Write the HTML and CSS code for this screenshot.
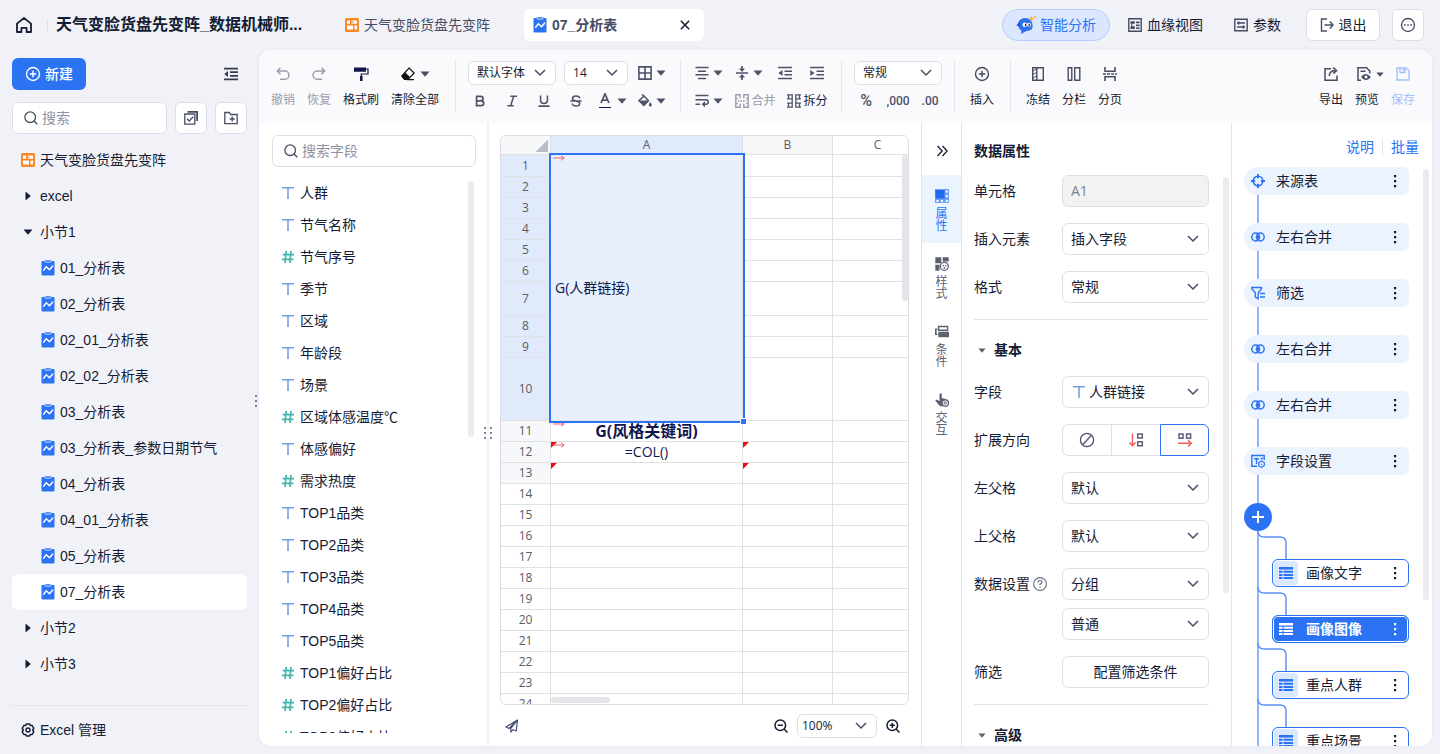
FILE: index.html
```html
<!DOCTYPE html>
<html lang="zh-CN">
<head>
    <meta charset="UTF-8">
    <meta name="viewport" content="width=device-width, initial-scale=1.0">
    <title>07_分析表</title>
    <link rel="stylesheet" href="styles.css">
</head>
<body>
    <!-- icon sprite -->
    <svg class="sprite" aria-hidden="true">
        <symbol id="i-home" viewBox="0 0 16 16"><path d="M1 6.600 8 1l7 5.600V15H10.600v-4.200H5.400V15H1z" fill="none" stroke="currentColor" stroke-width="1.800" stroke-linejoin="round"/></symbol>
        <symbol id="i-board" viewBox="0 0 14 14"><rect width="14" height="14" rx="1.500" fill="#fb8726"/><path d="M2 2.500h3v3.300H2zM6.500 2.500H12v3.300H6.500zM2 7.500h6v4H2zM9.500 7.500H12v4H9.500z" fill="#fff"/><path d="M6 4.200h3" stroke="#fb8726"/></symbol>
        <symbol id="i-report" viewBox="0 0 14 16"><rect x=".5" y="1" width="13" height="14.500" rx="1" fill="#2c73f4"/><path d="M3.500 0h7v1.600q0 1.400-1.400 1.400H4.900Q3.500 3 3.500 1.600z" fill="#8fb5fa"/><path d="M5 1h4" stroke="#2c73f4"/><path d="M2.600 10.300 5.300 6.800l3.200 3 3-3.600" fill="none" stroke="#fff" stroke-width="1.400"/><path d="M10.200 5.400h2v2zM2 9.400l1.600 1.600H2z" fill="#fff"/></symbol>
        <symbol id="i-close" viewBox="0 0 10 10"><path d="M.8.8l8.400 8.400M9.200.8.8 9.200" stroke="currentColor" stroke-width="1.500"/></symbol>
        <symbol id="i-bot" viewBox="0 0 20 18"><path d="M2 7Q4 2 9.500 2T16.500 8.500 10.500 15L5 18l.5-3Q3 13.500 2.500 10.500z" fill="#2c73f4"/><path d="M.3 9.200 3.400 6.300l.8 4.400z" fill="#1b50c9"/><circle cx="8.800" cy="8.800" r="2.300" fill="#fff"/><circle cx="13" cy="8.800" r="2" fill="#fff"/><path d="M9 7.700h1.200v2.500H9zM12.600 7.700h1.200v2.500h-1.200z" fill="#141c33"/><path d="M15.500 0q.3 2.300 2.600 2.700-2.300.4-2.600 2.700-.4-2.300-2.700-2.700 2.300-.4 2.700-2.700z" fill="#fbae17"/><circle cx="19" cy="1" r=".9" fill="#fbae17"/></symbol>
        <symbol id="i-lineage" viewBox="0 0 14 14"><path d="M.8.8h12.400v12.400H.8z" fill="none" stroke="currentColor" stroke-width="1.400"/><path d="M2.500 3.200h4.300v2.600H2.500zM8 3.600h3.600v1.600H8zM8 6.600h3.600v1.600H8zM2.500 8.300h4.300v2.600H2.500zM8 9.500h3.600v1.600H8z" fill="currentColor"/><path d="M3.800 5v4" stroke="currentColor"/></symbol>
        <symbol id="i-params" viewBox="0 0 14 14"><path d="M.8 1.300h12.400v11.400H.8z" fill="none" stroke="currentColor" stroke-width="1.400"/><path d="M3 5h8M3 9h8" stroke="currentColor" stroke-width="1.300"/><path d="M4.600 3.600v2.800M9.400 7.600v2.800" stroke="currentColor" stroke-width="1.600"/></symbol>
        <symbol id="i-exit" viewBox="0 0 14 14"><path d="M7 1H1.500v12H7M4.500 7H13M9.800 3.600 13 7l-3.200 3.400" fill="none" stroke="currentColor" stroke-width="1.400"/></symbol>
        <symbol id="i-more" viewBox="0 0 16 16"><circle cx="8" cy="8" r="6.500" fill="none" stroke="currentColor" stroke-width="1.300"/><path d="M4 7.300h1.600v1.500H4zM7.200 7.300h1.600v1.500H7.200zM10.400 7.300H12v1.500h-1.600z" fill="currentColor"/></symbol>
        <symbol id="i-plus-circle" viewBox="0 0 16 16"><circle cx="8" cy="8" r="6.500" fill="none" stroke="currentColor" stroke-width="1.400"/><path d="M8 4.800v6.400M4.800 8h6.400" stroke="currentColor" stroke-width="1.500"/></symbol>
        <symbol id="i-collapse" viewBox="0 0 14 14"><path d="M0 1.700h14M6 5.200h8M6 8.800h8M0 12.300h14" stroke="currentColor" stroke-width="1.800"/><path d="M4 4v6L.3 7z" fill="currentColor"/></symbol>
        <symbol id="i-indent-l" viewBox="0 0 14 14"><path d="M0 1.500h14M6.500 5.200H14M6.500 8.800H14M0 12.500h14" stroke="currentColor" stroke-width="1.600"/><path d="M4.500 4v6L.3 7z" fill="currentColor"/></symbol>
        <symbol id="i-indent-r" viewBox="0 0 14 14"><path d="M0 1.500h14M6.500 5.200H14M6.500 8.800H14M0 12.500h14" stroke="currentColor" stroke-width="1.600"/><path d="M.3 4v6l4.200-3z" fill="currentColor"/></symbol>
        <symbol id="i-search" viewBox="0 0 14 14"><circle cx="6.200" cy="6.200" r="5.300" fill="none" stroke="currentColor" stroke-width="1.300"/><path d="M10 10l3.300 3.300" stroke="currentColor" stroke-width="1.400"/></symbol>
        <symbol id="i-multi" viewBox="0 0 14 14"><path d="M.8 3h10v10.200H.8z" fill="none" stroke="currentColor" stroke-width="1.300"/><path d="M3 7.700 5.200 10l4-4.300" fill="none" stroke="currentColor" stroke-width="1.300"/><path d="M3.500 0H14v10h-1.800V1.800H3.500z" fill="currentColor"/></symbol>
        <symbol id="i-folder" viewBox="0 0 14 14"><path d="M.8 1.500h4.400l1.500 2h6.500v9.200H.8z" fill="none" stroke="currentColor" stroke-width="1.300"/><path d="M8.200 5.500v5M5.700 8h5" stroke="currentColor" stroke-width="1.400"/></symbol>
        <symbol id="i-caret" viewBox="0 0 10 6"><path d="M.5.500h9L5 5.800z" fill="currentColor"/></symbol>
        <symbol id="i-caret-r" viewBox="0 0 6 10"><path d="M.5.500v9L5.800 5z" fill="currentColor"/></symbol>
        <symbol id="i-chevron" viewBox="0 0 12 8"><path d="M1 1l5 5 5-5" fill="none" stroke="currentColor" stroke-width="1.500"/></symbol>
        <symbol id="i-gear" viewBox="0 0 14 14"><path d="M5.400 1h3.200l.8 1.600 1.800-.1 1.600 2.800L11.700 7l1.100 1.700-1.600 2.800-1.800-.1L8.600 13H5.400l-.8-1.600-1.800.1-1.600-2.800L2.300 7 1.200 5.300l1.600-2.800 1.800.1z" fill="none" stroke="currentColor" stroke-width="1.500" stroke-linejoin="round"/><circle cx="7" cy="7" r="2" fill="none" stroke="currentColor" stroke-width="1.400"/></symbol>
        <symbol id="i-text" viewBox="0 0 12 12"><path d="M0 .8h12M6 .8V12" stroke="#7a9ce2" stroke-width="1.600"/></symbol>
        <symbol id="i-num" viewBox="0 0 12 12"><path d="M4.200 0 3 12M9 0 7.800 12M.7 3.700H12M0 8.300h11.400" stroke="#40b5ac" stroke-width="1.700"/></symbol>
        <symbol id="i-undo" viewBox="0 0 14 14"><path d="M4.500.8 1.300 4l3.200 3.200M1.500 4h7.300a4 4 0 0 1 0 8.300H4" fill="none" stroke="currentColor" stroke-width="1.500"/></symbol>
        <symbol id="i-redo" viewBox="0 0 14 14"><path d="M9.500.8 12.700 4 9.500 7.200M12.500 4H5.200a4 4 0 0 0 0 8.300H10" fill="none" stroke="currentColor" stroke-width="1.500"/></symbol>
        <symbol id="i-brush" viewBox="0 0 16 14"><path d="M1 .5h12v4.300H1z" fill="#11174d"/><path d="M13 2h2v5H8.300v3" fill="none" stroke="#11174d" stroke-width="1.200"/><path d="M7 9h2.600v5H7z" fill="#11174d"/></symbol>
        <symbol id="i-eraser" viewBox="0 0 14 14"><path d="M8 1l5.200 5L7 12.300H3.500L.8 9z" fill="#fff" stroke="#111" stroke-width="1.200"/><path d="M4 5.200 9.300 10.200 7 12.600H3.300L.5 9zM6 12h7v1.300H6z" fill="#111"/></symbol>
        <symbol id="i-border" viewBox="0 0 14 14"><path d="M.9.9h12.200v12.200H.9zM7 1v12M1 7h12" fill="none" stroke="currentColor" stroke-width="1.600"/></symbol>
        <symbol id="i-bold" viewBox="0 0 14 14"><path d="M3 1.500h4.800q2.700 0 2.700 2.700T7.800 6.900H3zM3 6.900h5.300q3 0 3 2.800t-3 2.800H3z" fill="none" stroke="currentColor" stroke-width="2"/></symbol>
        <symbol id="i-italic" viewBox="0 0 14 14"><path d="M5 1.500h8M1.500 12.500H9M9 1.500 5.400 12.500" stroke="currentColor" stroke-width="1.800"/></symbol>
        <symbol id="i-underline" viewBox="0 0 14 14"><path d="M3 .5v5.700q0 3.800 4 3.800t4-3.800V.5M.5 13h13" fill="none" stroke="currentColor" stroke-width="1.800"/></symbol>
        <symbol id="i-strike" viewBox="0 0 14 14"><path d="M11.500 4Q11 1.200 7 1.200T2.800 4.200q0 2 4.200 2.800t4.400 2.900q0 2.900-4.400 2.900T2.500 10M.5 7h13" fill="none" stroke="currentColor" stroke-width="1.700"/></symbol>
        <symbol id="i-color" viewBox="0 0 14 16"><path d="M3 10 7 .8 11 10M4.400 7.200h5.200" fill="none" stroke="currentColor" stroke-width="1.700"/><path d="M1 14.500h12" stroke="#11174d" stroke-width="1.200"/></symbol>
        <symbol id="i-fill" viewBox="0 0 14 14"><path d="M5.500 1.500 10.500 6.700l-4.600 4.700L1 6.700l4.700-4.500" fill="none" stroke="currentColor" stroke-width="1.500"/><path d="M1 6.500h9.500l-4.600 5zM12.300 8q1.500 2.200 1.500 3a1.400 1.400 0 0 1-3 0q0-.8 1.500-3z" fill="currentColor"/><path d="M4 0l2 2.500" stroke="currentColor" stroke-width="1.300"/></symbol>
        <symbol id="i-align" viewBox="0 0 14 14"><path d="M.5 1.500h13M3 5.200h8M.5 8.800h13M3 12.500h8" stroke="currentColor" stroke-width="1.600"/></symbol>
        <symbol id="i-valign" viewBox="0 0 14 14"><path d="M1 7h12M7 0v4M7 14v-4" stroke="currentColor" stroke-width="1.700"/><path d="M4 2.500h6L7 6zM4 11.500h6L7 8z" fill="currentColor"/></symbol>
        <symbol id="i-wrap" viewBox="0 0 14 14"><path d="M.5 1.500h13M.5 5.700H11q2.300 0 2.300 2.300T11 10.300H8M.5 10.300H5" fill="none" stroke="currentColor" stroke-width="1.600"/><path d="M10 7.300v6l-3.400-3z" fill="currentColor"/></symbol>
        <symbol id="i-merge" viewBox="0 0 14 14"><path d="M5.200 4.300V.8H.8v12.400h4.400V9.700M8.800 4.300V.8h4.400v12.400H8.800V9.700M.8 4.500h2M.8 9.500h2M11.200 4.500h2M11.200 9.500h2" fill="none" stroke="currentColor" stroke-width="1.400"/><path d="M3 7h8" stroke="currentColor" stroke-width="1.300" stroke-dasharray="1.500 1"/></symbol>
        <symbol id="i-split" viewBox="0 0 14 14"><path d="M0 .8h5.200v12.400H0M14 .8H8.800v12.400H14M0 4.800h5M0 9.200h5M9 4.800h5M9 9.200h5M1.500 1v4M1.500 9v4M12.500 1v4M12.500 9v4" fill="none" stroke="currentColor" stroke-width="1.300"/></symbol>
        <symbol id="i-freeze" viewBox="0 0 14 14"><path d="M1.700.8h10.600v12.400H1.700zM5.800.8v12.400" fill="none" stroke="currentColor" stroke-width="1.400"/><path d="M2 4l3.500-2M2 7.500l3.500-2M2 11l3.500-2" stroke="currentColor"/></symbol>
        <symbol id="i-columns" viewBox="0 0 14 14"><path d="M1.200.8h3.600v12.400H1.200zM7.700.8h5.100v12.400H7.700z" fill="none" stroke="currentColor" stroke-width="1.400"/></symbol>
        <symbol id="i-page" viewBox="0 0 14 14"><path d="M2 0v4.200h10V0M2 14V9.800h10V14" fill="none" stroke="currentColor" stroke-width="1.600"/><path d="M0 7h14" stroke="currentColor" stroke-width="1.600" stroke-dasharray="3 1"/></symbol>
        <symbol id="i-export" viewBox="0 0 14 14"><path d="M7 1.700H1v11.500h12V8.500" fill="none" stroke="currentColor" stroke-width="1.500"/><path d="M5.300 9Q5.300 4 11 3.500M9 .6l3.600 2.900L9.300 6.600" fill="none" stroke="currentColor" stroke-width="1.500"/></symbol>
        <symbol id="i-preview" viewBox="0 0 14 14"><path d="M4 13.200H1V.8h8.500L12.700 4v2.500M3.500 4.200h5" fill="none" stroke="currentColor" stroke-width="1.500"/><path d="M4 10q4.500-6 9.800 0-4.800 6.500-9.800 0z" fill="currentColor"/><circle cx="9" cy="10" r="1.500" fill="#fafafc"/></symbol>
        <symbol id="i-save" viewBox="0 0 14 14"><path d="M1 1h9.300L13 3.700V13H1zM4 1v4.500h5V1M7.500 2v2" fill="none" stroke="currentColor" stroke-width="1.400"/></symbol>
        <symbol id="i-plane" viewBox="0 0 14 14"><path d="M12.500 1 1 8l3 1.500zM12.500 1 5.800 9.500V13L8 10.700l3.200 1.300zM4 9.500 9 5" fill="none" stroke="currentColor" stroke-width="1.200" stroke-linejoin="round"/></symbol>
        <symbol id="i-zoom-out" viewBox="0 0 14 14"><circle cx="6.300" cy="6.300" r="5.300" fill="none" stroke="currentColor" stroke-width="1.500"/><path d="M10 10l3.500 3.500M3.700 6.300h5.200" stroke="currentColor" stroke-width="1.500"/></symbol>
        <symbol id="i-zoom-in" viewBox="0 0 14 14"><circle cx="6.300" cy="6.300" r="5.300" fill="none" stroke="currentColor" stroke-width="1.500"/><path d="M10 10l3.500 3.500M3.700 6.300h5.200M6.300 3.700v5.200" stroke="currentColor" stroke-width="1.500"/></symbol>
        <symbol id="i-double" viewBox="0 0 12 12"><path d="M1.500 1l4.700 5-4.700 5M6.500 1l4.700 5-4.700 5" fill="none" stroke="currentColor" stroke-width="1.300"/></symbol>
        <symbol id="i-attr" viewBox="0 0 14 14"><path d="M0 0h14v14H0z" fill="#6fa0f8"/><path d="M.5 1h9v8.500h-9z" fill="#1f69f3"/><path d="M10.800 1.500h2v2h-2zM10.800 6h2v2h-2zM1.500 11h2v2h-2zM6 11h2v2H6zM10.800 11h2v2h-2z" fill="#fff"/></symbol>
        <symbol id="i-style" viewBox="0 0 14 14"><path d="M.3.3h6v6h-6zM7.700.3h6v4.200h-6zM.3 7.700h4.200v6H.3z" fill="currentColor"/><circle cx="9.300" cy="9.300" r="4" fill="#fff" stroke="currentColor" stroke-width="1.300"/><path d="M7.500 8H9v1.200H7.500zM10 8h1.300v1.200H10zM8.600 10.300h1.600v1.500H8.600z" fill="currentColor"/></symbol>
        <symbol id="i-cond" viewBox="0 0 14 14"><path d="M3.600 1.500h9v3.800h-9z" fill="none" stroke="currentColor" stroke-width="1.400"/><path d="M3.300 6.800H14v5.500H3.300zM0 3.500h2.500v1.300h-.9v4h.9V10H0z" fill="currentColor"/></symbol>
        <symbol id="i-touch" viewBox="0 0 14 14"><path d="M4.500.5h2.300V5L12 6.500l1 1.800-4 5H5L.3 7.800l1-1.300L4.500 8z" fill="currentColor"/><circle cx="10.300" cy="10" r="3.200" fill="#fff" stroke="currentColor" stroke-width="1.200"/><circle cx="10.300" cy="10" r="1.200" fill="none" stroke="currentColor"/></symbol>
        <symbol id="i-none" viewBox="0 0 16 16"><circle cx="8" cy="8" r="6.600" fill="none" stroke="currentColor" stroke-width="1.300"/><path d="M3.800 12.500l8.500-9" stroke="currentColor" stroke-width="1.300"/></symbol>
        <symbol id="i-down" viewBox="0 0 16 16"><path d="M4.500 1.500v12M1.500 10.500l3 3.300 3-3.300" fill="none" stroke="#ee5b5b" stroke-width="1.400"/><path d="M9.700 2h4.600v4H9.700zM9.700 9.700h4.600v4H9.700z" fill="none" stroke="#5b6080" stroke-width="1.500"/></symbol>
        <symbol id="i-right" viewBox="0 0 16 16"><path d="M2 2h4v4.300H2zM9.600 2h4v4.300h-4z" fill="none" stroke="#5b6080" stroke-width="1.500"/><path d="M1 11.300h13M11 8.200l3.300 3.100-3.300 3.100" fill="none" stroke="#ee5b5b" stroke-width="1.400"/></symbol>
        <symbol id="i-help" viewBox="0 0 14 14"><circle cx="7" cy="7" r="6.400" fill="none" stroke="currentColor" stroke-width="1.100"/><path d="M5 5.500q0-2 2-2t2 1.700Q9 6.300 7 7.300v1.300M7 9.700v1.300" fill="none" stroke="currentColor" stroke-width="1.200"/></symbol>
        <symbol id="i-source" viewBox="0 0 14 14"><circle cx="7" cy="7" r="4.800" fill="none" stroke="currentColor" stroke-width="1.600"/><path d="M7 0v4.200M7 9.800V14M0 7h4.200M9.800 7H14" stroke="currentColor" stroke-width="1.900"/></symbol>
        <symbol id="i-join" viewBox="0 0 14 14"><circle cx="4.700" cy="7" r="3.900" fill="none" stroke="currentColor" stroke-width="1.500"/><circle cx="9.300" cy="7" r="3.900" fill="none" stroke="currentColor" stroke-width="1.500"/><path d="M7 4q2.200 3 0 6-2.200-3 0-6z" fill="currentColor"/></symbol>
        <symbol id="i-filter" viewBox="0 0 14 14"><path d="M.8 1.500h9.700v1.300L7.200 6.700v6L4.300 11V6.700L.8 2.800z" fill="none" stroke="currentColor" stroke-width="1.400"/><path d="M9 7.500h5M9 11h5" stroke="currentColor" stroke-width="1.400"/></symbol>
        <symbol id="i-field" viewBox="0 0 14 14"><path d="M6 12.300H.8V1.500h12.400V6M3 4.700h5M5.500 4.700V10M9.500 4.500H12" fill="none" stroke="currentColor" stroke-width="1.400"/><path d="M10.500 7l2.800 1.600v3.100l-2.800 1.600-2.800-1.600V8.600z" fill="none" stroke="currentColor" stroke-width="1.200"/><circle cx="10.500" cy="10.200" r=".8" fill="currentColor"/></symbol>
        <symbol id="i-table" viewBox="0 0 14 12"><path d="M0 0h14v2.600H0zM0 3.800h3.500v2H0zM4.500 3.800H14v2H4.500zM0 6.900h3.500v2H0zM4.500 6.900H14v2H4.500zM0 10h3.500v2H0zM4.500 10H14v2H4.500z" fill="currentColor"/></symbol>
        <symbol id="i-dots" viewBox="0 0 4 14"><path d="M1 1h2.200v2.200H1zM1 6h2.200v2.200H1zM1 11h2.200v2.200H1z" fill="currentColor"/></symbol>
        <symbol id="i-plus" viewBox="0 0 12 12"><path d="M6 0v12M0 6h12" stroke="currentColor" stroke-width="2"/></symbol>
        <symbol id="i-expand" viewBox="0 0 12 6"><path d="M0 3h11M8 .7 11.200 3 8 5.300" fill="none" stroke="#f8606c"/></symbol>
        <symbol id="i-branch" viewBox="0 0 28 28"><path d="M-1 0q0 6 6 6h16q6 0 6 6v16" fill="none" stroke="#5e91f7" stroke-width="1.500"/></symbol>
    </svg>

    <header class="topbar">
        <a class="home" href="#" aria-label="首页"><svg class="ico-lg"><use href="#i-home"/></svg></a>
        <span class="topbar-sep"></span>
        <h1 class="project">天气变脸货盘先变阵_数据机械师...</h1>
        <nav class="tabs">
            <a class="tab" href="#"><svg class="ico"><use href="#i-board"/></svg>天气变脸货盘先变阵</a>
            <div class="tab tab-active"><svg class="ico-report"><use href="#i-report"/></svg>07_分析表<button class="tab-close" aria-label="关闭"><svg><use href="#i-close"/></svg></button></div>
        </nav>
        <div class="top-actions">
            <button class="btn-ai"><svg><use href="#i-bot"/></svg>智能分析</button>
            <button class="btn-text"><svg class="ico"><use href="#i-lineage"/></svg>血缘视图</button>
            <button class="btn-text btn-params"><svg class="ico"><use href="#i-params"/></svg>参数</button>
            <button class="btn-box btn-exit"><svg class="ico"><use href="#i-exit"/></svg>退出</button>
            <button class="btn-box btn-icon" aria-label="更多"><svg class="ico-lg"><use href="#i-more"/></svg></button>
        </div>
    </header>

    <div class="layout">
        <aside class="sidebar">
            <div class="sidebar-head">
                <button class="btn-new"><svg class="ico-lg"><use href="#i-plus-circle"/></svg>新建</button>
                <button class="btn-fold" aria-label="收起"><svg class="ico"><use href="#i-collapse"/></svg></button>
            </div>
            <div class="sidebar-search">
                <label class="search"><svg class="ico"><use href="#i-search"/></svg><input type="text" placeholder="搜索" aria-label="搜索"></label>
                <button class="btn-box btn-icon" aria-label="多选"><svg class="ico"><use href="#i-multi"/></svg></button>
                <button class="btn-box btn-icon" aria-label="新建文件夹"><svg class="ico"><use href="#i-folder"/></svg></button>
            </div>
            <nav class="tree">
                <a class="node" href="#"><svg class="ico"><use href="#i-board"/></svg>天气变脸货盘先变阵</a>
                <a class="node" href="#"><svg class="caret-r"><use href="#i-caret-r"/></svg>excel</a>
                <a class="node" href="#"><svg class="caret-d"><use href="#i-caret"/></svg>小节1</a>
                <a class="node leaf" href="#"><svg class="ico-report"><use href="#i-report"/></svg>01_分析表</a>
                <a class="node leaf" href="#"><svg class="ico-report"><use href="#i-report"/></svg>02_分析表</a>
                <a class="node leaf" href="#"><svg class="ico-report"><use href="#i-report"/></svg>02_01_分析表</a>
                <a class="node leaf" href="#"><svg class="ico-report"><use href="#i-report"/></svg>02_02_分析表</a>
                <a class="node leaf" href="#"><svg class="ico-report"><use href="#i-report"/></svg>03_分析表</a>
                <a class="node leaf" href="#"><svg class="ico-report"><use href="#i-report"/></svg>03_分析表_参数日期节气</a>
                <a class="node leaf" href="#"><svg class="ico-report"><use href="#i-report"/></svg>04_分析表</a>
                <a class="node leaf" href="#"><svg class="ico-report"><use href="#i-report"/></svg>04_01_分析表</a>
                <a class="node leaf" href="#"><svg class="ico-report"><use href="#i-report"/></svg>05_分析表</a>
                <a class="node leaf node-active" href="#"><svg class="ico-report"><use href="#i-report"/></svg>07_分析表</a>
                <a class="node" href="#"><svg class="caret-r"><use href="#i-caret-r"/></svg>小节2</a>
                <a class="node" href="#"><svg class="caret-r"><use href="#i-caret-r"/></svg>小节3</a>
            </nav>
            <a class="sidebar-foot" href="#"><svg class="ico"><use href="#i-gear"/></svg>Excel 管理</a>
            <span class="grip grip-sidebar"></span>
        </aside>

        <main class="workspace">
            <div class="toolbar">
                <div class="tools">
                    <button class="tool muted"><svg class="ico"><use href="#i-undo"/></svg>撤销</button>
                    <button class="tool muted"><svg class="ico"><use href="#i-redo"/></svg>恢复</button>
                    <button class="tool"><svg class="ico-lg"><use href="#i-brush"/></svg>格式刷</button>
                    <button class="tool"><span class="tool-icons"><svg class="ico"><use href="#i-eraser"/></svg><svg class="caret"><use href="#i-caret"/></svg></span>清除全部</button>
                </div>
                <span class="sep"></span>
                <div class="rows">
                    <div class="row">
                        <span class="select select-sm w88"><select aria-label="字体"><option>默认字体</option></select><svg><use href="#i-chevron"/></svg></span>
                        <span class="select select-sm w64"><select aria-label="字号"><option>14</option></select><svg><use href="#i-chevron"/></svg></span>
                        <button class="mini mini-drop" aria-label="边框"><svg class="ico"><use href="#i-border"/></svg><svg class="caret"><use href="#i-caret"/></svg></button>
                    </div>
                    <div class="row">
                        <button class="mini" aria-label="加粗"><svg class="ico-sm"><use href="#i-bold"/></svg></button>
                        <button class="mini" aria-label="斜体"><svg class="ico-sm"><use href="#i-italic"/></svg></button>
                        <button class="mini" aria-label="下划线"><svg class="ico-sm"><use href="#i-underline"/></svg></button>
                        <button class="mini" aria-label="删除线"><svg class="ico-sm"><use href="#i-strike"/></svg></button>
                        <button class="mini mini-drop" aria-label="字体颜色"><svg class="ico-lg"><use href="#i-color"/></svg><svg class="caret"><use href="#i-caret"/></svg></button>
                        <button class="mini mini-drop" aria-label="填充颜色"><svg class="ico"><use href="#i-fill"/></svg><svg class="caret"><use href="#i-caret"/></svg></button>
                    </div>
                </div>
                <span class="sep"></span>
                <div class="rows">
                    <div class="row">
                        <button class="mini mini-drop" aria-label="水平对齐"><svg class="ico"><use href="#i-align"/></svg><svg class="caret"><use href="#i-caret"/></svg></button>
                        <button class="mini mini-drop" aria-label="垂直对齐"><svg class="ico"><use href="#i-valign"/></svg><svg class="caret"><use href="#i-caret"/></svg></button>
                        <button class="mini" aria-label="减少缩进"><svg class="ico"><use href="#i-indent-l"/></svg></button>
                        <button class="mini" aria-label="增加缩进"><svg class="ico"><use href="#i-indent-r"/></svg></button>
                    </div>
                    <div class="row">
                        <button class="mini mini-drop" aria-label="自动换行"><svg class="ico"><use href="#i-wrap"/></svg><svg class="caret"><use href="#i-caret"/></svg></button>
                        <button class="mini mini-label muted"><svg class="ico"><use href="#i-merge"/></svg>合并</button>
                        <button class="mini mini-label"><svg class="ico"><use href="#i-split"/></svg><span>拆分</span></button>
                    </div>
                </div>
                <span class="sep"></span>
                <div class="rows">
                    <div class="row">
                        <span class="select select-sm w88"><select aria-label="数字格式"><option>常规</option></select><svg><use href="#i-chevron"/></svg></span>
                    </div>
                    <div class="row">
                        <button class="mini num percent">%</button>
                        <button class="mini num">,000</button>
                        <button class="mini num">.00</button>
                    </div>
                </div>
                <span class="sep"></span>
                <div class="tools">
                    <button class="tool"><svg class="ico-lg"><use href="#i-plus-circle"/></svg>插入</button>
                </div>
                <span class="sep"></span>
                <div class="tools">
                    <button class="tool"><svg class="ico"><use href="#i-freeze"/></svg>冻结</button>
                    <button class="tool"><svg class="ico"><use href="#i-columns"/></svg>分栏</button>
                    <button class="tool"><svg class="ico"><use href="#i-page"/></svg>分页</button>
                </div>
                <div class="tools tools-right">
                    <button class="tool"><svg class="ico"><use href="#i-export"/></svg>导出</button>
                    <button class="tool"><span class="tool-icons"><svg class="ico"><use href="#i-preview"/></svg><svg class="caret caret-sm"><use href="#i-caret"/></svg></span>预览</button>
                    <button class="tool disabled"><svg class="ico"><use href="#i-save"/></svg>保存</button>
                </div>
            </div>

            <div class="panels">
                <section class="fields">
                    <label class="search"><svg class="ico"><use href="#i-search"/></svg><input type="text" placeholder="搜索字段" aria-label="搜索字段"></label>
                    <ul class="field-list">
                        <li><svg><use href="#i-text"/></svg>人群</li>
                        <li><svg><use href="#i-text"/></svg>节气名称</li>
                        <li><svg><use href="#i-num"/></svg>节气序号</li>
                        <li><svg><use href="#i-text"/></svg>季节</li>
                        <li><svg><use href="#i-text"/></svg>区域</li>
                        <li><svg><use href="#i-text"/></svg>年龄段</li>
                        <li><svg><use href="#i-text"/></svg>场景</li>
                        <li><svg><use href="#i-num"/></svg>区域体感温度℃</li>
                        <li><svg><use href="#i-text"/></svg>体感偏好</li>
                        <li><svg><use href="#i-num"/></svg>需求热度</li>
                        <li><svg><use href="#i-text"/></svg>TOP1品类</li>
                        <li><svg><use href="#i-text"/></svg>TOP2品类</li>
                        <li><svg><use href="#i-text"/></svg>TOP3品类</li>
                        <li><svg><use href="#i-text"/></svg>TOP4品类</li>
                        <li><svg><use href="#i-text"/></svg>TOP5品类</li>
                        <li><svg><use href="#i-num"/></svg>TOP1偏好占比</li>
                        <li><svg><use href="#i-num"/></svg>TOP2偏好占比</li>
                        <li><svg><use href="#i-num"/></svg>TOP3偏好占比</li>
                    </ul>
                    <span class="scrollbar scroll-fields"></span>
                    <span class="grip grip-fields"></span>
                </section>

                <section class="sheet-panel">
                    <div class="sheet">
                        <table>
                            <colgroup><col class="col-head"><col class="col-a"><col class="col-b"><col class="col-c"></colgroup>
                            <thead><tr><th class="corner"></th><th class="sel">A</th><th class="used">B</th><th>C</th></tr></thead>
                            <tbody>
                                <tr class="h22"><th class="sel">1</th><td class="selected" rowspan="10"><svg class="expand"><use href="#i-expand"/></svg>G(人群链接)</td><td></td><td></td></tr>
                                <tr><th class="sel">2</th><td></td><td></td></tr>
                                <tr><th class="sel">3</th><td></td><td></td></tr>
                                <tr><th class="sel">4</th><td></td><td></td></tr>
                                <tr><th class="sel">5</th><td></td><td></td></tr>
                                <tr><th class="sel">6</th><td></td><td></td></tr>
                                <tr class="h34"><th class="sel">7</th><td></td><td></td></tr>
                                <tr><th class="sel">8</th><td></td><td></td></tr>
                                <tr><th class="sel">9</th><td></td><td></td></tr>
                                <tr class="h63"><th class="sel">10</th><td></td><td></td></tr>
                                <tr><th class="used">11</th><td class="center strong"><svg class="expand"><use href="#i-expand"/></svg>G(风格关键词)</td><td></td><td></td></tr>
                                <tr><th class="used">12</th><td class="center flag"><svg class="expand"><use href="#i-expand"/></svg>=COL()</td><td class="flag"></td><td></td></tr>
                                <tr><th class="used">13</th><td class="flag"></td><td class="flag"></td><td></td></tr>
                                <tr><th>14</th><td></td><td></td><td></td></tr>
                                <tr><th>15</th><td></td><td></td><td></td></tr>
                                <tr><th>16</th><td></td><td></td><td></td></tr>
                                <tr><th>17</th><td></td><td></td><td></td></tr>
                                <tr><th>18</th><td></td><td></td><td></td></tr>
                                <tr><th>19</th><td></td><td></td><td></td></tr>
                                <tr><th>20</th><td></td><td></td><td></td></tr>
                                <tr><th>21</th><td></td><td></td><td></td></tr>
                                <tr><th>22</th><td></td><td></td><td></td></tr>
                                <tr><th>23</th><td></td><td></td><td></td></tr>
                                <tr><th>24</th><td></td><td></td><td></td></tr>
                            </tbody>
                        </table>
                        <span class="scrollbar scroll-v"></span>
                        <span class="scrollbar scroll-h"></span>
                    </div>
                    <div class="sheet-foot">
                        <button class="send" aria-label="发送"><svg class="ico"><use href="#i-plane"/></svg></button>
                        <button aria-label="缩小"><svg class="ico"><use href="#i-zoom-out"/></svg></button>
                        <span class="select select-sm w80"><select aria-label="缩放"><option>100%</option></select><svg><use href="#i-chevron"/></svg></span>
                        <button aria-label="放大"><svg class="ico"><use href="#i-zoom-in"/></svg></button>
                    </div>
                </section>

                <nav class="rail">
                    <button class="rail-toggle" aria-label="收起面板"><svg><use href="#i-double"/></svg></button>
                    <button class="rail-tab rail-active"><svg class="ico"><use href="#i-attr"/></svg><span>属性</span></button>
                    <button class="rail-tab"><svg class="ico"><use href="#i-style"/></svg><span>样式</span></button>
                    <button class="rail-tab"><svg class="ico"><use href="#i-cond"/></svg><span>条件</span></button>
                    <button class="rail-tab"><svg class="ico"><use href="#i-touch"/></svg><span>交互</span></button>
                </nav>

                <section class="props">
                    <h2>数据属性</h2>
                    <div class="prop"><label for="cell">单元格</label><input id="cell" class="input" type="text" value="A1" disabled></div>
                    <div class="prop"><label for="element">插入元素</label><span class="select"><select id="element"><option>插入字段</option></select><svg><use href="#i-chevron"/></svg></span></div>
                    <div class="prop"><label for="format">格式</label><span class="select"><select id="format"><option>常规</option></select><svg><use href="#i-chevron"/></svg></span></div>
                    <h3><svg class="caret caret-sm"><use href="#i-caret"/></svg>基本</h3>
                    <div class="prop"><label for="field">字段</label><span class="select select-typed"><select id="field"><option>人群链接</option></select><svg class="type"><use href="#i-text"/></svg><svg><use href="#i-chevron"/></svg></span></div>
                    <div class="prop"><span>扩展方向</span>
                        <div class="segment">
                            <button aria-label="不扩展"><svg class="ico-lg"><use href="#i-none"/></svg></button>
                            <button aria-label="向下扩展"><svg class="ico-lg"><use href="#i-down"/></svg></button>
                            <button class="segment-on" aria-label="向右扩展"><svg class="ico-lg"><use href="#i-right"/></svg></button>
                        </div>
                    </div>
                    <div class="prop"><label for="left">左父格</label><span class="select"><select id="left"><option>默认</option></select><svg><use href="#i-chevron"/></svg></span></div>
                    <div class="prop"><label for="top">上父格</label><span class="select"><select id="top"><option>默认</option></select><svg><use href="#i-chevron"/></svg></span></div>
                    <div class="prop"><label for="data">数据设置<svg class="ico"><use href="#i-help"/></svg></label>
                        <div class="stack">
                            <span class="select"><select id="data"><option>分组</option></select><svg><use href="#i-chevron"/></svg></span>
                            <span class="select"><select aria-label="分组方式"><option>普通</option></select><svg><use href="#i-chevron"/></svg></span>
                        </div>
                    </div>
                    <div class="prop"><span>筛选</span><button class="btn-box">配置筛选条件</button></div>
                    <h3><svg class="caret caret-sm"><use href="#i-caret"/></svg>高级</h3>
                    <span class="scrollbar scroll-props"></span>
                </section>

                <section class="flow">
                    <div class="flow-links"><a href="#">说明</a><a href="#">批量</a></div>
                    <ul class="steps">
                        <li><svg class="ico"><use href="#i-source"/></svg>来源表<button aria-label="更多"><svg><use href="#i-dots"/></svg></button></li>
                        <li><svg class="ico"><use href="#i-join"/></svg>左右合并<button aria-label="更多"><svg><use href="#i-dots"/></svg></button></li>
                        <li><svg class="ico"><use href="#i-filter"/></svg>筛选<button aria-label="更多"><svg><use href="#i-dots"/></svg></button></li>
                        <li><svg class="ico"><use href="#i-join"/></svg>左右合并<button aria-label="更多"><svg><use href="#i-dots"/></svg></button></li>
                        <li><svg class="ico"><use href="#i-join"/></svg>左右合并<button aria-label="更多"><svg><use href="#i-dots"/></svg></button></li>
                        <li><svg class="ico"><use href="#i-field"/></svg>字段设置<button aria-label="更多"><svg><use href="#i-dots"/></svg></button></li>
                    </ul>
                    <button class="step-add" aria-label="添加"><svg><use href="#i-plus"/></svg></button>
                    <ul class="outputs">
                        <li><svg class="branch"><use href="#i-branch"/></svg><div class="output"><span class="output-icon"><svg><use href="#i-table"/></svg></span>画像文字<button aria-label="更多"><svg><use href="#i-dots"/></svg></button></div></li>
                        <li><svg class="branch"><use href="#i-branch"/></svg><div class="output output-on"><span class="output-icon"><svg><use href="#i-table"/></svg></span>画像图像<button aria-label="更多"><svg><use href="#i-dots"/></svg></button></div></li>
                        <li><svg class="branch"><use href="#i-branch"/></svg><div class="output"><span class="output-icon"><svg><use href="#i-table"/></svg></span>重点人群<button aria-label="更多"><svg><use href="#i-dots"/></svg></button></div></li>
                        <li><svg class="branch"><use href="#i-branch"/></svg><div class="output"><span class="output-icon"><svg><use href="#i-table"/></svg></span>重点场景<button aria-label="更多"><svg><use href="#i-dots"/></svg></button></div></li>
                    </ul>
                    <span class="scrollbar scroll-flow"></span>
                </section>
            </div>
        </main>
    </div>
</body>
</html>
```
FILE: styles.css
```css
* {
    box-sizing: border-box;
}
body {
    margin: 0;
    height: 100vh;
    display: flex;
    flex-direction: column;
    overflow: hidden;
    background: #f1f2f8;
    color: #141c33;
    font-family: "Liberation Sans", "Noto Sans CJK SC", sans-serif;
    font-size: 14px;
    line-height: 20px;
}
button, input, select {
    font: inherit;
    color: inherit;
    margin: 0;
}
button {
    display: flex;
    align-items: center;
    justify-content: center;
    padding: 0;
    border: none;
    background: none;
    white-space: nowrap;
    cursor: pointer;
}
a {
    color: inherit;
    text-decoration: none;
}
ul {
    list-style: none;
    margin: 0;
    padding: 0;
}
h1, h2, h3 {
    margin: 0;
    font-size: 14px;
    font-weight: 500;
}
svg {
    flex: none;
}
.sprite {
    display: none;
}

/* icon sizes */
.ico {
    width: 14px;
    height: 14px;
}
.ico-lg {
    width: 16px;
    height: 16px;
}
.ico-sm {
    width: 12px;
    height: 12px;
}
.ico-report {
    width: 14px;
    height: 16px;
}
.caret, .caret-d {
    width: 10px;
    height: 6px;
}
.caret-sm {
    width: 8px;
    height: 5px;
}
.caret-r {
    width: 6px;
    height: 10px;
}

/* shared controls */
.btn-box {
    height: 32px;
    background: #fff;
    border: 1px solid #dcdfe8;
    border-radius: 6px;
}
.btn-icon {
    width: 32px;
    color: #464d63;
}
.search {
    display: flex;
    align-items: center;
    gap: 4px;
    height: 32px;
    padding: 0 11px;
    background: #fff;
    border: 1px solid #dcdfe8;
    border-radius: 6px;
    color: #464d63;
}
.search input {
    flex: 1;
    min-width: 0;
    padding: 0;
    border: none;
    outline: none;
    background: none;
}
.search input::placeholder {
    color: #8d93a3;
}
.select {
    display: grid;
    grid-template-rows: 100%;
    align-items: center;
    height: 32px;
    line-height: 20px;
}
.select > * {
    grid-area: 1 / 1;
}
.select select {
    appearance: none;
    width: 100%;
    height: 100%;
    padding: 0 28px 0 8px;
    background: #fff;
    border: 1px solid #dcdfe8;
    border-radius: 6px;
}
.select svg {
    width: 12px;
    height: 8px;
    margin-right: 10px;
    justify-self: end;
    color: #464d63;
    pointer-events: none;
}
.select-sm {
    height: 24px;
    font-family: "Open Sans", "Noto Sans CJK SC", sans-serif;
    font-size: 12px;
}
.select-typed select {
    padding-left: 26px;
}
.select .type {
    width: 12px;
    height: 12px;
    margin-left: 11px;
    justify-self: start;
}
.w64 {
    width: 64px;
}
.w80 {
    width: 80px;
}
.w88 {
    width: 88px;
}
.scrollbar {
    position: absolute;
    width: 6px;
    border-radius: 3px;
    background: #ebecef;
}
.grip {
    position: absolute;
    height: 12px;
    background-image: radial-gradient(circle at 1px 1px, #7b8193 1px, transparent 1px);
    background-size: 6px 5px;
}

/* top bar */
.topbar {
    display: flex;
    align-items: center;
    flex: none;
    height: 50px;
    padding: 0 16px;
}
.home {
    display: flex;
}
.topbar-sep {
    width: 1px;
    height: 12px;
    margin: 0 8px 0 15px;
    background: #dfe1e9;
}
.project {
    width: 272px;
    font-size: 16px;
    line-height: 24px;
    font-weight: 600;
    white-space: nowrap;
}
.tabs {
    display: flex;
    gap: 8px;
    margin-left: 8px;
}
.tab {
    display: flex;
    align-items: center;
    gap: 5px;
    width: 180px;
    height: 32px;
    padding: 0 14px 0 9px;
    border-radius: 6px;
    color: #464d63;
}
.tab-active {
    background: #fff;
    font-weight: 600;
}
.tab-close {
    margin-left: auto;
    color: #141c33;
}
.tab-close svg {
    width: 10px;
    height: 10px;
}
.top-actions {
    display: flex;
    align-items: center;
    margin-left: auto;
}
.btn-ai {
    gap: 4px;
    width: 108px;
    height: 32px;
    margin-right: 18px;
    border: 1px solid #b4cefb;
    border-radius: 16px;
    background: #dae7fe;
    color: #2c73f4;
}
.btn-ai svg {
    width: 20px;
    height: 18px;
}
.btn-text {
    gap: 5px;
    margin-right: 31px;
}
.btn-text svg, .btn-exit svg {
    color: #464d63;
}
.btn-params {
    margin-right: 25px;
}
.btn-exit {
    gap: 5px;
    width: 74px;
    margin-right: 12px;
}

/* left sidebar */
.layout {
    display: flex;
    flex: 1;
    min-height: 0;
    padding: 0 8px 8px 0;
}
.sidebar {
    position: relative;
    display: flex;
    flex-direction: column;
    flex: none;
    width: 259px;
    padding: 8px 12px 0;
}
.sidebar-head {
    display: flex;
    justify-content: space-between;
    align-items: center;
    padding-right: 9px;
}
.btn-new {
    gap: 4px;
    width: 74px;
    height: 32px;
    border-radius: 6px;
    background: #2c73f4;
    color: #fff;
    font-weight: 500;
}
.btn-fold {
    color: #333a50;
}
.sidebar-search {
    display: flex;
    gap: 8px;
    margin: 12px 0 8px;
}
.sidebar-search .search {
    flex: 1;
    min-width: 0;
}
.tree {
    flex: 1;
    min-height: 0;
    overflow: hidden;
}
.node {
    display: flex;
    align-items: center;
    gap: 5px;
    height: 36px;
    padding-left: 9px;
    border-radius: 6px;
}
.node .caret-r {
    margin: 0 4px;
}
.node .caret-d {
    margin: 0 2px;
}
.leaf {
    padding-left: 29px;
}
.node-active {
    background: #fff;
}
.sidebar-foot {
    display: flex;
    align-items: center;
    gap: 5px;
    height: 49px;
    margin-bottom: -8px;
    padding-left: 9px;
    border-top: 1px solid #e3e5ec;
}
.grip-sidebar {
    top: 345px;
    right: 2px;
    width: 2px;
}

/* workspace */
.workspace {
    display: flex;
    flex-direction: column;
    flex: 1;
    min-width: 0;
    overflow: hidden;
    background: #fff;
    border-radius: 12px;
    box-shadow: 0 0 4px #e3e5ee;
}
.toolbar {
    display: flex;
    flex: none;
    height: 73px;
    padding: 11px 13px 11px 9px;
    background: #fafafc;
    font-size: 12px;
}
.sep {
    width: 1px;
    margin: 0 12px;
    background: #e3e5ea;
}
.tools {
    display: flex;
    gap: 12px;
    padding: 0 4px 0 3px;
}
.tools-right {
    margin-left: auto;
}
.tool {
    flex-direction: column;
    justify-content: flex-start;
    gap: 9px;
    padding-top: 5px;
    line-height: 18px;
}
.tool svg {
    color: #464d63;
}
.tool .ico {
    margin: 1px 0;
}
.tool-icons {
    display: flex;
    align-items: center;
    gap: 5px;
}
.tool .caret-sm {
    margin-right: -8px;
}
.muted, .tool.muted svg {
    color: #9a9ead;
}
.disabled, .tool.disabled svg {
    color: #a2c0fa;
}
.rows {
    display: flex;
    flex-direction: column;
    gap: 4px;
}
.row {
    display: flex;
    gap: 8px;
    height: 24px;
}
.mini {
    width: 24px;
    height: 24px;
    color: #4d5368;
}
.mini-drop {
    gap: 4px;
    width: 32px;
}
.mini-label {
    gap: 3px;
    width: 44px;
}
.mini-label span {
    color: #141c33;
}
.mini.muted {
    color: #9a9ead;
}
.num {
    font-family: "Roboto", sans-serif;
    font-size: 12px;
    font-weight: 500;
}
.percent {
    font-size: 16px;
}

.panels {
    display: flex;
    flex: 1;
    min-height: 0;
}

/* field list */
.fields {
    position: relative;
    display: flex;
    flex-direction: column;
    flex: none;
    width: 230px;
    padding: 12px 12px 13px 13px;
    border-right: 2px solid #f1f2f5;
}
.fields .search {
    flex: none;
    width: 204px;
}
.field-list {
    flex: 1;
    min-height: 0;
    margin-top: 10px;
    overflow: hidden;
}
.field-list li {
    display: flex;
    align-items: center;
    gap: 6px;
    height: 32px;
    padding-left: 10px;
}
.field-list svg {
    width: 12px;
    height: 12px;
}
.scroll-fields {
    top: 58px;
    right: 13px;
    height: 256px;
}
.grip-fields {
    top: 304px;
    right: -5px;
    width: 8px;
}

/* spreadsheet */
.sheet-panel {
    display: flex;
    flex-direction: column;
    flex: 1;
    min-width: 0;
    padding: 12px 12px 0 11px;
}
.sheet {
    position: relative;
    flex: 1;
    min-height: 0;
    overflow: hidden;
    border: 1px solid #dadde6;
    border-radius: 6px;
    font-family: "Open Sans", "Noto Sans CJK SC", sans-serif;
}
.sheet table {
    width: 422px;
    table-layout: fixed;
    border-collapse: separate;
    border-spacing: 0;
}
.col-head {
    width: 50px;
}
.col-a {
    width: 192px;
}
.col-b, .col-c {
    width: 90px;
}
.sheet tr {
    height: 21px;
}
.sheet thead tr {
    height: 19px;
}
.sheet .h22 {
    height: 22px;
}
.sheet .h34 {
    height: 34px;
}
.sheet .h63 {
    height: 63px;
}
.sheet th, .sheet td {
    padding: 0;
    border-right: 1px solid #dfe1e3;
    border-bottom: 1px solid #dfe1e3;
    line-height: 16px;
}
.sheet th {
    color: #595d66;
    font-size: 12px;
    font-weight: 400;
}
.sheet th.sel {
    background: #e0eafa;
}
.sheet th.used {
    background: #f7f8fa;
}
.sheet .corner {
    background: linear-gradient(135deg, transparent 50%, #b9bccb 50%) right 2px bottom 2px / 13px 13px no-repeat #f7f8fa;
}
.sheet td {
    position: relative;
    color: #11174d;
}
.sheet .selected {
    padding-left: 4px;
    background: #e8f0fd;
}
.selected::before {
    content: "";
    position: absolute;
    inset: -2px -3px -3px -2px;
    z-index: 1;
    border: 2px solid #2c73f4;
}
.selected::after {
    content: "";
    position: absolute;
    right: -5px;
    bottom: -5px;
    z-index: 2;
    width: 5px;
    height: 5px;
    border: 1px solid #fff;
    background: #2c73f4;
}
.sheet .center {
    text-align: center;
}
.sheet .strong {
    font-size: 16px;
    font-weight: 700;
}
.expand {
    position: absolute;
    top: 0;
    left: 2px;
    width: 12px;
    height: 6px;
}
.flag::before {
    content: "";
    position: absolute;
    top: 0;
    left: 0;
    border-top: 6px solid #f80808;
    border-right: 6px solid transparent;
}
.scroll-v {
    top: 19px;
    right: 0;
    height: 146px;
    background: #e4e5e8;
}
.scroll-h {
    bottom: 1px;
    left: 50px;
    width: 59px;
    height: 6px;
    background: #e4e5e8;
}
.sheet-foot {
    display: flex;
    align-items: center;
    gap: 9px;
    height: 41px;
    padding: 0 9px 0 5px;
}
.sheet-foot .send {
    margin-right: auto;
    color: #464d6e;
}
.sheet-foot .select select {
    padding-left: 4px;
}

/* vertical tabs */
.rail {
    flex: none;
    width: 41px;
    border: solid #e3e5ea;
    border-width: 0 1px;
}
.rail button {
    width: 100%;
}
.rail-toggle {
    height: 52px;
    padding-top: 4px;
}
.rail-toggle svg {
    width: 12px;
    height: 12px;
}
.rail-tab {
    flex-direction: column;
    gap: 5px;
    height: 68px;
    padding-top: 2px;
    color: #5c6274;
    font-size: 12px;
}
.rail-tab span {
    width: 12px;
    line-height: 12px;
    white-space: normal;
}
.rail-active {
    background: #ebf3ff;
    color: #2c73f4;
}

/* properties */
.props {
    position: relative;
    flex: none;
    width: 270px;
    padding: 16px 22px 0 12px;
    border-right: 1px solid #e3e5ea;
    overflow: hidden;
}
.props h2 {
    height: 36px;
    line-height: 24px;
    font-weight: 600;
}
.prop {
    display: grid;
    grid-template-columns: 88px 1fr;
    margin-bottom: 16px;
    line-height: 32px;
}
.prop label {
    display: flex;
    align-items: center;
    align-self: start;
    gap: 3px;
    white-space: nowrap;
}
.prop label svg {
    color: #6a7080;
}
.input {
    width: 100%;
    height: 32px;
    padding: 0 8px;
    border: 1px solid #dcdfe8;
    border-radius: 6px;
    background: #f2f2f3;
    color: #7b8190;
    font-family: "Open Sans", "Noto Sans CJK SC", sans-serif;
}
.stack {
    display: grid;
    gap: 8px;
}
.props h3 {
    display: flex;
    align-items: center;
    gap: 8px;
    padding: 18px 0 14px 4px;
    border-top: 1px solid #e3e5ea;
    font-weight: 600;
    line-height: 24px;
}
.props h3 svg {
    color: #5c6274;
}
.segment {
    display: grid;
    grid-template-columns: repeat(3, 1fr);
    height: 32px;
    color: #4a5070;
}
.segment button {
    border: 1px solid #dcdfe8;
    border-right: none;
}
.segment button:first-child {
    border-radius: 6px 0 0 6px;
}
.segment .segment-on {
    border: 1px solid #2c73f4;
    border-radius: 0 6px 6px 0;
}
.scroll-props {
    top: 54px;
    right: 2px;
    height: 416px;
}

/* data flow */
.flow {
    position: relative;
    flex: none;
    width: 200px;
    padding: 12px 23px 0 12px;
    overflow: hidden;
}
.flow-links {
    display: flex;
    justify-content: flex-end;
    margin: 2px -10px 10px 0;
    color: #2c73f4;
}
.flow-links a {
    line-height: 16px;
    margin: 2px 0;
}
.flow-links a + a {
    margin-left: 8px;
    padding-left: 8px;
    border-left: 1px solid #dfe1e9;
}
.steps li {
    position: relative;
    display: flex;
    align-items: center;
    gap: 11px;
    height: 28px;
    margin-bottom: 28px;
    padding: 0 12px 0 7px;
    border-radius: 14px 6px 6px 14px;
    background: #ebf3ff;
}
.steps li > svg {
    color: #2c73f4;
}
.steps li::after {
    content: "";
    position: absolute;
    top: 28px;
    left: 13px;
    width: 2px;
    height: 28px;
    background: #94b5fa;
}
.flow li button {
    margin-left: auto;
}
.flow li button svg {
    width: 4px;
    height: 14px;
}
.step-add {
    width: 28px;
    height: 28px;
    border-radius: 14px;
    background: #2c73f4;
    color: #fff;
}
.step-add svg {
    width: 12px;
    height: 12px;
}
.outputs {
    margin-left: 13px;
    border-left: 2px solid #94b5fa;
}
.branch {
    display: block;
    width: 28px;
    height: 28px;
    overflow: visible;
}
.branch use, #i-branch {
    overflow: visible;
}
.output {
    display: flex;
    align-items: center;
    height: 28px;
    margin-left: 13px;
    padding: 1px 11px 1px 1px;
    border: 1px solid #2c73f4;
    border-radius: 6px;
    background: #fff;
}
.output-icon {
    display: grid;
    place-items: center;
    width: 24px;
    height: 24px;
    margin-right: 8px;
    border-radius: 4px;
    background: #dae7fe;
    color: #2c73f4;
}
.output-icon svg {
    width: 14px;
    height: 12px;
}
.output-on {
    background: #2c73f4;
    box-shadow: inset 0 0 0 1px #fff;
    color: #fff;
    font-weight: 600;
}
.output-on .output-icon {
    background: none;
    color: #fff;
}
.scroll-flow {
    top: 46px;
    right: 3px;
    height: 431px;
}
```
